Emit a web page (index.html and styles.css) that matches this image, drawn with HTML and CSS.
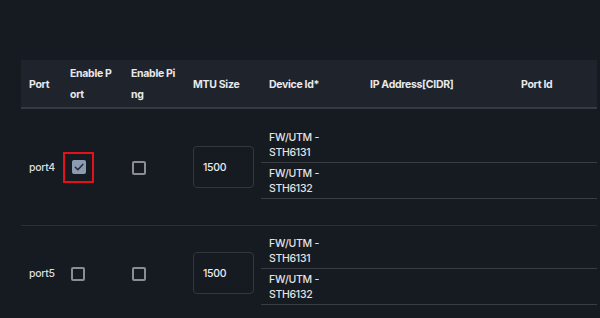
FILE: index.html
```html
<!DOCTYPE html>
<html>
<head>
<meta charset="utf-8">
<link rel="stylesheet" href="styles.css">
</head>
<body>
<div class="page">
  <table class="grid">
    <colgroup>
      <col class="c-port"><col class="c-en"><col class="c-ping"><col class="c-mtu"><col class="c-dev"><col class="c-ip"><col class="c-pid">
    </colgroup>
    <thead>
      <tr>
        <th>Port</th>
        <th class="wrap">Enable Port</th>
        <th class="wrap">Enable Ping</th>
        <th>MTU Size</th>
        <th>Device Id*</th>
        <th>IP Address[CIDR]</th>
        <th>Port Id</th>
      </tr>
    </thead>
    <tbody>
      <tr class="row-a">
        <td>port4</td>
        <td class="cb-cell">
          <span class="focus-ring"><span class="cb checked"><svg viewBox="0 0 14 14" width="14" height="14"><path d="M3.3 7.2 L5.9 9.7 L10.8 4.4" fill="none" stroke="#252a33" stroke-width="1.5" stroke-linecap="round" stroke-linejoin="round"/></svg></span></span>
        </td>
        <td class="cb-cell"><span class="cb"></span></td>
        <td><div class="mtu">1500</div></td>
        <td colspan="3" class="dev-cell">
          <div class="dev-list">
            <div class="dev-item">FW/UTM -<br>STH6131</div>
            <div class="dev-item">FW/UTM -<br>STH6132</div>
          </div>
        </td>
      </tr>
      <tr class="row-b">
        <td>port5</td>
        <td class="cb-cell"><span class="cb cb-plain"></span></td>
        <td class="cb-cell"><span class="cb"></span></td>
        <td><div class="mtu">1500</div></td>
        <td colspan="3" class="dev-cell">
          <div class="dev-list">
            <div class="dev-item">FW/UTM -<br>STH6131</div>
            <div class="dev-item">FW/UTM -<br>STH6132</div>
          </div>
        </td>
      </tr>
    </tbody>
  </table>
</div>
</body>
</html>
```
FILE: styles.css
```css
html, body {
  margin: 0;
  padding: 0;
  background: #161a21;
  font-family: Inter, "Noto Sans", sans-serif;
  color: #dcdde0;
  overflow: hidden;
}
.page {
  padding: 60px 3px 0 21px;
}
.grid {
  width: 576px;
  border-collapse: collapse;
  table-layout: fixed;
  font-size: 10.5px;
  letter-spacing: -0.3px;
}
.c-port { width: 41px; }
.c-en { width: 61px; }
.c-ping { width: 62px; }
.c-mtu { width: 76px; }
.c-dev { width: 101px; }
.c-ip { width: 151px; }
.c-pid { width: 84px; }

.grid th {
  background: #1f232b;
  color: #e8e9eb;
  font-weight: 700;
  text-align: left;
  vertical-align: middle;
  padding: 3px 8px 2px;
  line-height: 21px;
  border-bottom: 2px solid #363a41;
  white-space: nowrap;
}
.grid th.wrap {
  white-space: normal;
  word-break: break-all;
}
.grid td {
  padding: 0 8px;
  vertical-align: middle;
  border-bottom: 1px solid #2c3036;
  font-weight: 500;
  line-height: 15px;
}
.row-a td { height: 116px; }
.row-b td { height: 94px; }

.cb-cell { line-height: 0; }
.cb {
  display: inline-block;
  width: 14px;
  height: 14px;
  box-sizing: border-box;
  border: 2px solid #8b8d91;
  border-radius: 2px;
  margin-left: 1px;
  vertical-align: middle;
}
.cb-plain { margin-left: 1px; }
.cb.checked {
  border: none;
  background: #8c9bb3;
  margin-left: 0;
}
.cb.checked svg { display: block; }
.focus-ring {
  display: inline-block;
  margin-left: -7px;
  padding: 6px 6px 7px 7px;
  border: 2px solid #e3111b;
  line-height: 0;
}

.mtu {
  width: 61px;
  height: 42px;
  box-sizing: border-box;
  border: 1px solid #33373d;
  border-radius: 4px;
  padding-left: 9px;
  display: flex;
  align-items: center;
  color: #eceef0;
}

.dev-cell {
  padding: 0 !important;
}
.dev-list {
  margin-bottom: 9px;
}
.dev-item {
  padding: 3px 8px 2px;
  border-bottom: 1px solid #393c42;
  color: #e2e3e6;
}
```
